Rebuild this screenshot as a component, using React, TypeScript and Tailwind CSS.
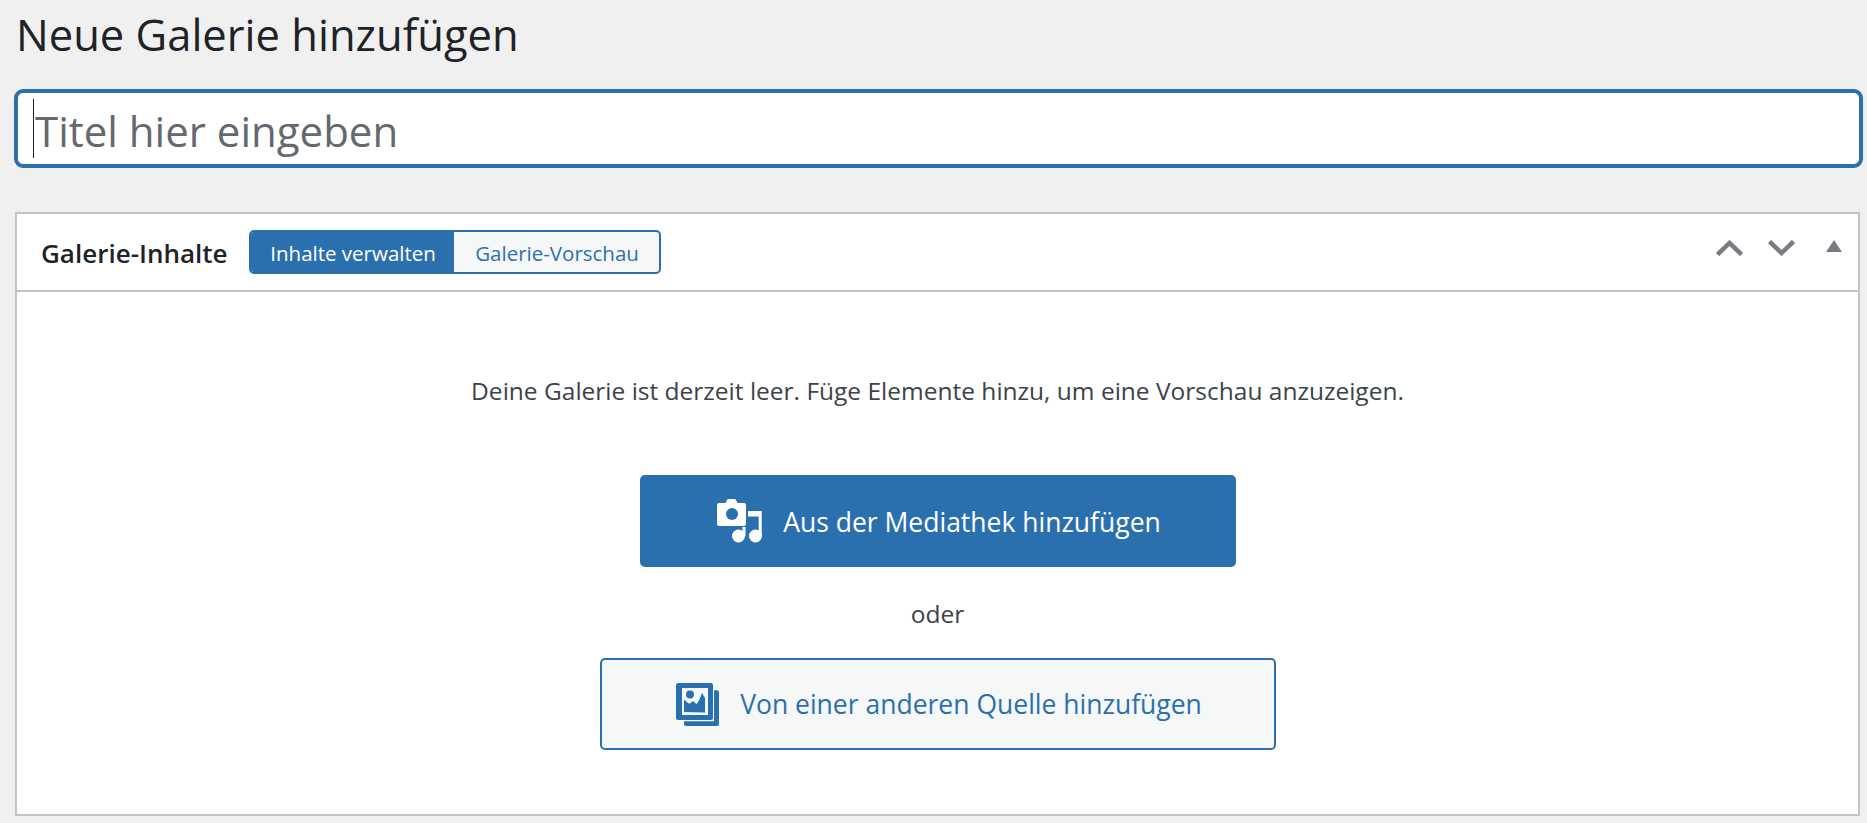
const font = "font-['Open_Sans','Noto_Sans',sans-serif]";

function MediaIcon() {
  return (
    <svg width="45" height="44" viewBox="0 0 45 44" fill="#ffffff">
      {/* camera */}
      <path d="M2 4h6.5L10 1a2 2 0 0 1 1.5-1h6a2 2 0 0 1 1.500 1L20.500 4H27a2 2 0 0 1 2 2v19a2 2 0 0 1-2 2H2a2 2 0 0 1-2-2V6a2 2 0 0 1 2-2z" />
      <circle cx="15" cy="15" r="6" fill="#2b70ae" />
      {/* notes */}
      <path d="M31 12h13.700v25h-3V17.500H31z" />
      <circle cx="38.500" cy="37" r="6.500" />
      <path d="M25.500 28h3v9h-3z" />
      <circle cx="21.500" cy="37" r="6.500" />
    </svg>
  );
}

function GalleryIcon() {
  return (
    <svg width="43" height="43" viewBox="0 0 43 43" fill="#2b70ae">
      <path fillRule="evenodd" d="M2 0h33a2 2 0 0 1 2 2v33a2 2 0 0 1-2 2H2a2 2 0 0 1-2-2V2a2 2 0 0 1 2-2zM6 5v27h26V5z" />
      <path d="M38 7.300h3a2 2 0 0 1 2 2V41a2 2 0 0 1-2 2H10a2 2 0 0 1-2-2v-2.700h30z" />
      <circle cx="14" cy="11.500" r="4" />
      <path d="M8 29V16.500l4 3.500c1.200 1 2.500.5 3-.5l2-1.500 3.500 3c2-2 3.500-6 5.500-11l3 5v14.500z" />
    </svg>
  );
}

export default function App() {
  return (
    <div className={`${font} h-[823px] overflow-hidden bg-[#f0f0f1] pl-[14px] pr-[4px] text-[#3c434a]`}>
      <h1 className="pl-[2px] pt-[8px] h-[89px] text-[43.500px] leading-[54px] text-[#1d2327]">Neue Galerie hinzufügen</h1>

      <div className="relative h-[79px] mb-[44px]">
        <input
          readOnly
          placeholder="Titel hier eingeben"
          className="w-full h-full rounded-[9px] border-4 border-[#2b70ae] bg-white pl-[17px] pt-[3px] text-[42px] caret-transparent outline-none placeholder:text-[#646970]"
        />
        <span className="absolute left-[19px] top-[10px] h-[59px] w-px bg-[#1d2327]" />
      </div>

      <div className="ml-px mr-[3px] h-[604px] border-2 border-[#c3c4c7] bg-white">
        <div className="flex h-[78px] items-center border-b-2 border-[#c3c4c7] pl-[24px] pr-[16px]">
          <h2 className="pt-[2px] text-[26px] font-semibold text-[#1d2327]">Galerie-Inhalte</h2>
          <div className="ml-[21px] flex h-[44px] w-[412px] overflow-hidden rounded-[5px] border-2 border-[#2b70ae] bg-[#f6f7f7] text-[20.500px]">
            <div className="flex w-[203px] items-center justify-center bg-[#2b70ae] pl-[2px] pt-[2px] text-white">Inhalte verwalten</div>
            <div className="flex flex-1 items-center justify-center pl-[2px] pt-[2px] text-[#2b70ae]">Galerie-Vorschau</div>
          </div>
          <div className="ml-auto flex items-start gap-[25px] pb-[8px]">
            <svg width="27" height="16" viewBox="0 0 27 16" fill="none" stroke="#787c82" strokeWidth="4.500">
              <path d="M1.500 14.500L13.500 3l12 11.500" />
            </svg>
            <svg width="27" height="16" viewBox="0 0 27 16" fill="none" stroke="#787c82" strokeWidth="4.500">
              <path d="M1.500 1.500L13.500 13l12-11.500" />
            </svg>
            <svg className="ml-[6px]" width="16" height="12" viewBox="0 0 16 12" fill="#787c82">
              <path d="M8 0l8 12H0z" />
            </svg>
          </div>
        </div>

        <div className="flex flex-col items-center pt-[84px] text-[24.500px]">
          <p className="leading-[30px]">Deine Galerie ist derzeit leer. Füge Elemente hinzu, um eine Vorschau anzuzeigen.</p>
          <button className="mt-[69px] flex h-[92px] w-[596px] items-center justify-center gap-[21px] rounded-[5px] bg-[#2b70ae] pl-[3px] text-[26.500px] text-white">
            <MediaIcon />
            <span className="pt-[3px]">Aus der Mediathek hinzufügen</span>
          </button>
          <p className="mt-[32px] leading-[30px]">oder</p>
          <button className="mt-[29px] flex h-[92px] w-[676px] items-center justify-center gap-[21px] rounded-[5px] border-2 border-[#2b70ae] bg-[#f6f7f7] pl-[3px] text-[26.500px] text-[#2b70ae]">
            <GalleryIcon />
            <span className="pt-[2px]">Von einer anderen Quelle hinzufügen</span>
          </button>
        </div>
      </div>
    </div>
  );
}
